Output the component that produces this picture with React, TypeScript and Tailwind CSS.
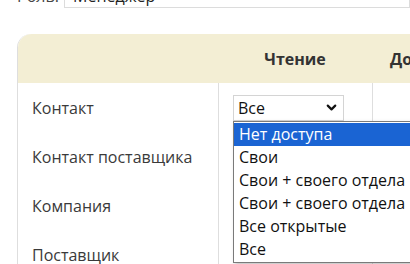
import { ChevronDown } from 'lucide-react'

const ROWS = ['Контакт', 'Контакт поставщика', 'Компания', 'Поставщик']

const OPTIONS = [
  'Нет доступа',
  'Свои',
  'Свои + своего отдела',
  'Свои + своего отдела',
  'Все открытые',
  'Все',
]

function AccessSelect() {
  return (
    <div className="relative">
      <div className="flex h-[26px] w-[111px] items-center justify-between border border-[#d4d4d4] bg-white pl-[4px] pr-[4px] text-[16px] text-[#111]">
        <span>Все</span>
        <ChevronDown size={15} strokeWidth={3.5} className="text-[#111]" />
      </div>
      <div className="absolute left-0 top-[26px] z-10 w-[230px] border border-[#7a7a7a] bg-white py-[1px] text-[16px] leading-[23px] text-[#111] shadow-[2px_2px_4px_rgba(0,0,0,0.25)]">
        {OPTIONS.map((opt, i) => (
          <div
            key={i}
            className={
              i === 0
                ? 'bg-[#1a64d3] px-[5px] text-white'
                : 'px-[5px] whitespace-nowrap'
            }
          >
            {opt}
          </div>
        ))}
      </div>
    </div>
  )
}

export default function App() {
  return (
    <div
      className="h-[264px] w-[410px] overflow-hidden bg-white text-[#333]"
      style={{ fontFamily: '"Open Sans", "Noto Sans", sans-serif' }}
    >
      <div className="-mt-[16px] flex items-center gap-[5px] pl-[17px] text-[16px]">
        <span className="text-[#444]">Роль:</span>
        <div className="flex h-[24px] w-[400px] items-center border border-[#dcdcdc] pl-[8px] text-[#222]">
          Менеджер
        </div>
      </div>

      <div className="ml-[17px] mt-[26px] w-[500px] rounded-tl-[14px] border-l border-[#dedede]">
        <div className="grid h-[49px] grid-cols-[200px_154px_1fr] items-center rounded-tl-[14px] bg-[#f3eed4] text-[16px] font-bold text-[#333]">
          <div />
          <div className="text-center">Чтение</div>
          <div className="pl-[18px]">Добавление</div>
        </div>
        {ROWS.map((row, i) => (
          <div
            key={row}
            className="grid h-[49px] grid-cols-[200px_154px_1fr] text-[16px]"
          >
            <div className="flex items-center pl-[14px] text-[#3a3a3a]">{row}</div>
            <div className="flex items-center border-l border-[#dedede] pl-[14px]">
              {i === 0 && <AccessSelect />}
              {i === 3 && <span className="pl-[50px] text-[#111]">Все</span>}
            </div>
            <div className="border-l border-[#dedede]" />
          </div>
        ))}
      </div>
    </div>
  )
}
